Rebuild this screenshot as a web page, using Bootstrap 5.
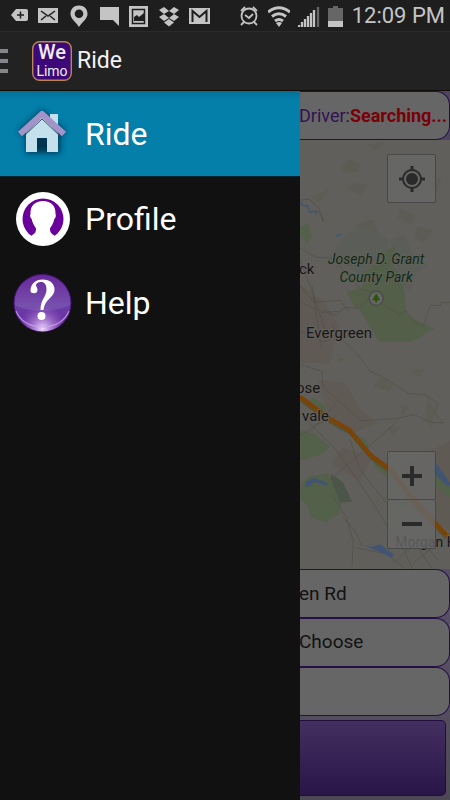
<!DOCTYPE html>
<html lang="en">
<head>
<meta charset="utf-8">
<meta name="viewport" content="width=device-width, initial-scale=1">
<title>We Limo - Ride</title>
<link href="https://cdn.jsdelivr.net/npm/bootstrap@5.3.0/dist/css/bootstrap.min.css" rel="stylesheet">
<style>
  body { font-family: Roboto, "Open Sans", sans-serif; background: #111; }
  .status-bar { height: 32px; background: #1e1e1e; color: #c4c4c4; font-size: 22px; line-height: 32px; padding-left: 8px; padding-right: 5px; border-bottom: 1px solid #2b2b2b; }
  .status-bar svg { width: 22px; height: 26px; flex: none; }
  .status-bar .battery { width: 16px; }
  .app-bar { height: 59px; background: #222; color: #f2f2f2; border-bottom: 1px solid #120c08; }
  .menu-btn { width: 8px; height: 26px; }
  .menu-btn svg, .app-logo { display: block; }
  .app-logo { width: 40px; height: 40px; margin-left: 24px; }
  .app-title { font-size: 23px; line-height: 32px; margin-left: 5px; }
  .drawer { width: 66.6667%; background: #111; }
  .drawer-item { height: 84px; padding-left: 12px; gap: 13px; color: #fff; font-size: 32px; line-height: 40px; }
  .drawer-item.active { height: 86px; background: linear-gradient(#056f94, #037faa 8px); border-bottom: 1px solid #06222d; }
  .drawer-item svg { width: 60px; height: 60px; flex: none; }
  .ride-pane { min-width: 0; background: linear-gradient(#4d455c, #575064 80%, #4d4954); }
  .field { display: block; width: 100%; height: 49px; background: #666; color: #121212; border: 1px solid #281046; border-left: 0; border-radius: 0 14px 14px 0; font-size: 19px; padding: 0; text-align: left; text-indent: -1px; white-space: nowrap; }
  .driver { font-size: 18px; line-height: 48px; color: #311452; }
  .driver strong { color: #7a0008; }
  .map-wrap { min-height: 428px; overflow: hidden; background: #615f5b; }
  .map-wrap .map-art { position: absolute; inset: 0; width: 100%; height: 100%; }
  .map-tools { position: absolute; inset: 14px 14px 20px auto; }
  .map-btn { width: 49px; height: 49px; padding: 0; background: rgba(104,104,104,.8); border: 1px solid #484848; color: #2a2a2a; border-radius: 2px; display: grid; place-items: center; }
  .map-btn + .map-btn { border-top: 0; }
  .request { height: 76px; margin: 4px 4px 4px 0; border: 1px solid #210d3c; border-left: 0; border-radius: 0 5px 5px 0; background: linear-gradient(#432f60, #2a1548); }
</style>
<script src="https://cdn.jsdelivr.net/npm/bootstrap@5.3.0/dist/js/bootstrap.bundle.min.js"></script>
</head>
<body class="min-vh-100 d-flex flex-column">
<div class="status-bar d-flex justify-content-between align-items-center">
  <div class="d-flex align-items-center gap-2">
    <svg viewBox="0 0 22 26" aria-hidden="true"><path fill="#c4c4c4" d="M3 12 8 6h10q2 0 2 2v8q0 2-2 2H8z"/><path stroke="#1e1e1e" stroke-width="1.5" d="M9 12h7M12.500 8.500v7"/></svg>
    <svg viewBox="0 0 22 26" aria-hidden="true"><path fill="#c4c4c4" d="M0 5h20v15H0z"/><path fill="none" stroke="#1e1e1e" stroke-width="1.500" d="m3 8 7 5 7-5M3 17l5-4m4 0 5 4"/></svg>
    <svg viewBox="0 0 22 26" aria-hidden="true"><path fill="#c4c4c4" fill-rule="evenodd" d="M11 2.500c-5 0-8.500 3.500-8.500 8.200C2.500 16 8 19 11 24c3-5 8.500-8 8.500-13.300 0-4.700-3.500-8.200-8.500-8.200zm0 4a4.300 4.300 0 1 1 0 8.600 4.300 4.300 0 0 1 0-8.600z"/></svg>
    <svg viewBox="0 0 22 26" aria-hidden="true"><path fill="#c4c4c4" d="M2 4h19v19l-6-6H2z"/></svg>
    <svg viewBox="0 0 22 26" aria-hidden="true"><path fill="#c4c4c4" d="M1 3h19v21H1z"/><path fill="none" stroke="#1e1e1e" stroke-width="1.500" d="M4.500 6.500h12v14h-12z"/><path fill="#1e1e1e" d="M6 18v-4l3-2 2 2 5-4v8z"/></svg>
    <svg viewBox="0 0 22 26" aria-hidden="true"><path fill="#c4c4c4" d="m1 7 5-3 5 4-5 3zM11 8l5-4 5 3-5 4zM1 14l5-3 5 4-5 3zM11 15l5-4 5 3-5 4zM6 19.500l5-3.500 5 3.500-5 4z"/></svg>
    <svg viewBox="0 0 22 26" aria-hidden="true"><path fill="#c4c4c4" d="M1 5h21v16H1z"/><path fill="none" stroke="#1e1e1e" stroke-width="2" d="M4.500 19V8l7 6 7-6v11"/></svg>
  </div>
  <div class="d-flex align-items-center gap-2">
    <svg viewBox="0 0 22 26" fill="none" stroke="#c4c4c4" stroke-width="1.800" aria-hidden="true"><circle cx="11" cy="13" r="7.500"/><path d="m3 8 4-4m8 0 4 4M7 12l4 3 4-4M6 19l-3 3m13-3 3 3"/></svg>
    <svg viewBox="0 0 22 26" fill="none" stroke="#c4c4c4" stroke-width="3" aria-hidden="true"><path d="M0 9q11-8.500 22 0M4 13.500q7-5.500 14 0M7 18q4-3 8 0"/><path fill="#c4c4c4" stroke="none" d="m8 20 3 4 3-4q-3-2-6 0z"/></svg>
    <svg viewBox="0 0 22 26" stroke-width="2.300" aria-hidden="true"><path stroke="#c4c4c4" d="M1 24v-2M4 24v-5M7 24v-8M10 24V13M13 24V10M16 24V7"/><path stroke="#666" d="M20 24V4"/></svg>
    <svg class="battery" viewBox="0 0 16 26" aria-hidden="true"><path fill="#666" d="M0 5h5V3h5v2h5v13H0z"/><path fill="#c4c4c4" d="M0 18h15v6H0z"/></svg>
    <span>12:09 PM</span>
  </div>
</div>

<header class="app-bar d-flex align-items-center">
  <button class="menu-btn border-0 bg-transparent p-0" aria-label="Menu" type="button">
    <svg width="8" height="26" viewBox="0 0 8 26"><path fill="#85858a" d="M0 1h8v4H0zM0 11h8v4H0zM0 21h8v4H0z"/></svg>
  </button>
  <svg class="app-logo" viewBox="0 0 40 40" role="img" aria-label="We Limo">
    <rect x=".7" y=".7" width="38.600" height="38.600" rx="7" fill="#3d0878" stroke="#b98550" stroke-width="1.400"/>
    <g fill="#eee" font-family="Roboto, sans-serif" text-anchor="middle"><text x="20" y="18" font-size="20" font-weight="500">We</text><text x="20" y="35" font-size="14">Limo</text></g>
  </svg>
  <h1 class="app-title fw-normal mb-0">Ride</h1>
</header>

<main class="d-flex flex-grow-1">
  <nav class="drawer flex-shrink-0" aria-label="Main">
    <a href="#ride" class="drawer-item active d-flex align-items-center text-decoration-none" aria-current="page">
      <svg viewBox="0 0 60 60" aria-hidden="true">
        <defs><filter id="glow" x="-30%" y="-30%" width="160%" height="160%"><feGaussianBlur stdDeviation="3"/></filter></defs>
        <path fill="#00243a" opacity=".8" filter="url(#glow)" d="M6 28 30 6l24 22-6 3v18H14V31z"/>
        <path fill="#c3e0eb" d="M38 10h8v13h-8zM14 29l16-16 16 16v19H35V34H25v14H14z"/>
        <path fill="none" stroke="#34516c" stroke-width="1" d="m12 32 18-17 18 17"/>
        <path fill="none" stroke="#a293c8" stroke-width="6" stroke-linejoin="round" d="M8 30 30 10l22 20"/>
      </svg>
      Ride</a>
    <a href="#profile" class="drawer-item d-flex align-items-center text-decoration-none">
      <svg viewBox="0 0 60 60" aria-hidden="true"><circle cx="31" cy="30" r="27" fill="#fff"/><circle cx="31" cy="30" r="20.500" fill="#6a009b"/><path fill="#fff" d="M31 12c-8 0-13 5-12.500 13-.8 1-.3 4 1.200 5 1 5 3 7 4.300 9.500 0 4-1 5-5 7.500 6 6 18 6 24 0-4-2.500-5-3.500-5-7.500 1.300-2.500 3.300-4.500 4.300-9.500 1.500-1 2-4 1.200-5C44 17 39 12 31 12z"/></svg>
      Profile</a>
    <a href="#help" class="drawer-item d-flex align-items-center text-decoration-none">
      <svg viewBox="0 0 60 60" aria-hidden="true">
        <defs>
          <linearGradient id="orb" x2="0" y2="1"><stop stop-color="#67279b"/><stop offset=".55" stop-color="#7750ad"/><stop offset="1" stop-color="#7030a5"/></linearGradient>
          <radialGradient id="shine" cx=".5" cy=".95" r=".42"><stop stop-color="#f0dcff"/><stop offset="1" stop-color="#a060d0" stop-opacity="0"/></radialGradient>
        </defs>
        <circle cx="30.500" cy="30" r="28.500" fill="url(#orb)" stroke="#4a1480"/>
        <path fill="#5a209c" opacity=".4" d="M2 32q28 12 57 0c-1 15-13 26-28.500 26S3 47 2 32z"/>
        <circle cx="30.500" cy="30" r="28.500" fill="url(#shine)"/>
        <path fill="none" stroke="#c9a5e8" stroke-width="1.200" opacity=".8" d="M4 38c4 10 14 16 26.500 16S53 48 57 38"/>
        <path fill="#fff" d="M18.500 18c0-7 5-11.500 12-11.500 7.500 0 12 4 12 10 0 8-9.500 9-11 20.500h-3c0-11 6-13 6-20.500 0-5-2-7.500-5.500-7.500-3 0-5 1.500-5 3 0 2 1.500 2.500 1.500 5 0 2-1.500 3.300-3.500 3.300s-3.500-1-3.500-2.300z"/><circle cx="29.500" cy="43" r="4" fill="#fff"/>
      </svg>
      Help</a>
  </nav>

  <section class="ride-pane flex-grow-1 d-flex flex-column overflow-hidden" aria-label="Ride request">
    <div class="field driver">Driver:<strong>Searching...</strong></div>
    <div class="map-wrap position-relative flex-grow-1">
      <svg class="map-art" viewBox="300 141 150 428" preserveAspectRatio="xMinYMin slice" role="img" aria-label="Map">
        <g fill="#5c5c55"><path d="m341 168 8-8 12 5-4 8-12 1zM356 184l12 2-8 10-13-7zM366 146l20-3-10 8zM400 209l15 7-4 9-13-6zM426 186l15-8-5 17zM330 190l-10 13-9-5zM417 227l16 4-10 13-9-7zM355 225l18-5 5 14-15 5zM381 378l12 7-4 7-16-5zM410 371l15-2-6 9zM427 397l7 13-3 19-5-9zM401 406l9 2-8 8zM388 429l13-3-8 9z"/></g>
        <path fill="#5b5e58" d="m344 236 20-10 24 14-4 22-18 20-16-14-21-8zM390 240l14-4 10 22 14 8-14 10-4 18-11-15z"/>
        <g fill="#605a55"><path d="M300 285l23 16 16 25-9 38-30-1zM318 380l28 4 15 27 17 12-24 10-26-20zM342 448l30 8-12 26-28-18zM400 465l50-24v90l-25-13zM301 430l26 16-4 8-23-13z"/></g>
        <g fill="#53604a"><path d="m300 430 16 5 14 12-10 8-20 6z"/><path d="m301 483 8-6 18-3 12 5 4 18-4 17-12 8-16-4-4-13-7-6z"/><path fill="#4c5549" d="m331 474 12 9 9 19-12 1-8-20z"/><path d="m313 398 12 8 2 8-17-13zM372 459l13 10 7 12-18-14zM430 464l20 24v10l-18-13zM300 228l8-4 4 13-5 7-7-9zM338 358l7 2-7 3zM354 433l12 8 3 8-12-9zM383 497l36 5 31 11-28-8-28 2z"/></g>
        <path fill="#535f49" d="m395 247-9 4-5 11-17 11-2 15-16 5 9 15h3l21 34h33l22-13-20-9-8-6-3-33-12-18 5-10z"/>
        <g fill="none" stroke="#525149" stroke-width=".8"><path d="M300 249l16 9 17 1 15 17 14 15 18 1M323 311l13 5 9-8 13 1 9-8 14 3 18 11 7-4 7 11 10 4 7-20h10l1-3h8l16-2M300 286l14 17 26-2 9 12M300 302l22 11 17-1M300 331l22 11 18-5M312 286l9 61M300 260l15 40 13 40M300 201l9-1 9 8 6 14M300 365l22 7 1 15 16 15 22 19 35-2 18-4 18 8h11l-9-9 4-10-13-9-17-1-24-16-15-7-13-18-13-12-11-15M300 414l35 35 34 48 29 47M300 436l16-11 19-8M309 433l26-28M330 480l38-33 28-24M350 440l10 30 35 44 37 55M332 495l14 22 7 24-1 24M343 518l12 13 7 15M356 548l31 6 18 15M399 540l14 30M413 545l-20 18M418 538l20 22M450 533l-37 30M310 213q10-5 13 9"/></g>
        <path fill="none" stroke="#415572" stroke-width="1.500" d="m300 203 4 4 3-1 3 7 5-1 2 3M336 237l5-2"/>
        <path fill="#415572" d="M304 492l2-10 8-4 15 6-3 2-12-4-3 4-6 1zM364 545l8 2 8-3 14 11-3 3-11-6-8-3zM434 461l8 11 8 12-2 3-11-10-4-8zM334 422l9 7-1 3-9-7z"/>
        <path fill="none" stroke="#59522f" stroke-width="5" d="m300 399 30 22 20 11 22 26 20 15 24 34 34 33"/>
        <path fill="none" stroke="#7b4305" stroke-width="4" d="m300 397 30 22 19 11 21 25 22 16 26 34 32 34"/>
        <g font-family="Roboto, sans-serif" font-size="15" fill="#161616" stroke="#64625e" stroke-width="2" paint-order="stroke">
          <text x="299" y="275">ck</text><text x="306" y="339">Evergreen</text><text x="296" y="393">ose</text><text x="302" y="421">vale</text><text x="395" y="547" font-size="14">Morgan H</text>
          <g font-size="14" font-style="italic" text-anchor="middle" fill="#14291b" stroke="#5e6258"><text x="376" y="265">Joseph D. Grant</text><text x="376" y="283">County Park</text></g>
        </g>
        <circle cx="376" cy="299" r="7" fill="#666" stroke="#4b4e49" stroke-width="1.500"/><path fill="#2d5506" d="m376 294 4 7h-3v2h-2v-2h-3z"/>
      </svg>
      <div class="map-tools d-flex flex-column justify-content-between">
        <button type="button" class="map-btn" aria-label="My location"><svg width="26" height="26" viewBox="0 0 26 26" fill="none" stroke="currentColor" stroke-width="2"><circle cx="13" cy="13" r="9"/><circle cx="13" cy="13" r="6" fill="currentColor" stroke="none"/><path stroke-width="3" d="M13 0v5m0 16v5M0 13h5m16 0h5"/></svg></button>
        <div>
          <button type="button" class="map-btn" aria-label="Zoom in"><svg width="22" height="22" viewBox="0 0 22 22"><path stroke="currentColor" stroke-width="4" d="M1 11h20M11 1v20"/></svg></button>
          <button type="button" class="map-btn" aria-label="Zoom out"><svg width="22" height="22" viewBox="0 0 22 22"><path stroke="currentColor" stroke-width="4" d="M1 11h20"/></svg></button>
        </div>
      </div>
    </div>
    <input class="field" type="text" value="en Rd" aria-label="Pickup address">
    <button class="field" type="button">Choose</button>
    <input class="field" type="text" aria-label="Notes">
    <button class="request" type="button" aria-label="Request ride"></button>
  </section>
</main>
</body>
</html>
